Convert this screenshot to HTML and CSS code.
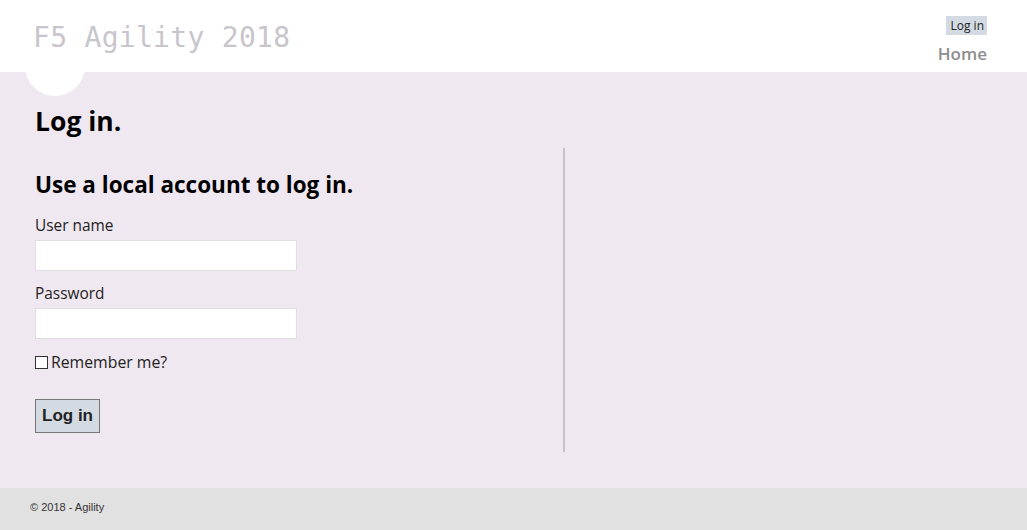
FILE: index.html
```html
<!DOCTYPE html>
<html>
<head>
<meta charset="utf-8">
<link rel="stylesheet" href="styles.css">
</head>
<body>
<header class="top">
  <div class="blob"></div>
  <div class="brand">F5 Agility 2018</div>
  <nav class="nav">
    <a class="login-link">Log in</a>
    <a class="home-link">Home</a>
  </nav>
</header>
<main class="main">
  <h1 class="title">Log in.</h1>
  <div class="row">
    <section class="left">
      <h2 class="subtitle">Use a local account to log in.</h2>
      <div class="field">
        <label class="label">User name</label>
        <input class="input" type="text">
      </div>
      <div class="field">
        <label class="label">Password</label>
        <input class="input" type="password">
      </div>
      <div class="check">
        <span class="box"></span><span class="check-text">Remember me?</span>
      </div>
      <button class="btn">Log in</button>
    </section>
    <section class="right"></section>
  </div>
</main>
<footer class="foot">© 2018 - Agility</footer>
</body>
</html>
```
FILE: styles.css
```css
* { box-sizing: border-box; }
body {
  margin: 0;
  font-family: "Open Sans", "Noto Sans", sans-serif;
  color: #222;
  background: #f0e8f0;
}
.top {
  position: relative;
  height: 72px;
  background: #fff;
  display: flex;
  justify-content: space-between;
  padding: 0 40px 0 33px;
}
.brand {
  position: relative;
  z-index: 1;
  font-family: "DejaVu Sans Mono", "Liberation Mono", monospace;
  font-size: 28px;
  color: #c9c5cc;
  padding-top: 21px;
  letter-spacing: 0.3px;
}
.nav {
  display: flex;
  flex-direction: column;
  align-items: flex-end;
  padding-top: 16px;
}
.login-link {
  background: #d3dae2;
  color: #222;
  font-size: 12px;
  line-height: 19px;
  padding: 0 3px 0 4px;
}
.home-link {
  margin-top: 8px;
  color: #8e8e8e;
  font-weight: 600;
  font-size: 17px;
  line-height: 22px;
}
.blob {
  position: absolute;
  left: 25px;
  top: 36px;
  width: 60px;
  height: 60px;
  border-radius: 50%;
  background: #fff;
}
.main {
  padding: 0 35px;
  height: 416px;
}
.title {
  margin: 0;
  padding-top: 31px;
  font-size: 26.5px;
  font-weight: 700;
  color: #000;
  line-height: 36px;
}
.row {
  display: flex;
  margin-top: 9px;
}
.left {
  width: 530px;
  height: 304px;
  border-right: 2px solid #c9c2ca;
  padding-top: 21px;
}
.subtitle {
  margin: 0 0 15px;
  font-size: 22.5px;
  font-weight: 700;
  color: #000;
  line-height: 32px;
}
.field { margin-bottom: 13px; }
.label {
  display: block;
  font-size: 15.4px;
  line-height: 20px;
  color: #222;
  margin-bottom: 4px;
}
.input {
  display: block;
  width: 262px;
  height: 31px;
  border: 1px solid #e2dde2;
  background: #fff;
  margin: 0;
}
.check {
  display: flex;
  align-items: center;
  margin-top: 12px;
  font-size: 15.8px;
  line-height: 20px;
}
.box {
  width: 13px;
  height: 13px;
  border: 1px solid #333;
  background: #fff;
  margin-right: 3px;
}
.btn {
  margin-top: 27px;
  font-family: "Liberation Sans", Arial, sans-serif;
  font-weight: 700;
  font-size: 17px;
  color: #222;
  background: #d3dae2;
  border: 1px solid #777;
  width: 65px;
  height: 34px;
  padding: 0;
}
.foot {
  height: 42px;
  background: #e1e1e1;
  font-family: "Liberation Sans", Arial, sans-serif;
  font-size: 11px;
  color: #333;
  padding: 13px 0 0 30px;
}
```
